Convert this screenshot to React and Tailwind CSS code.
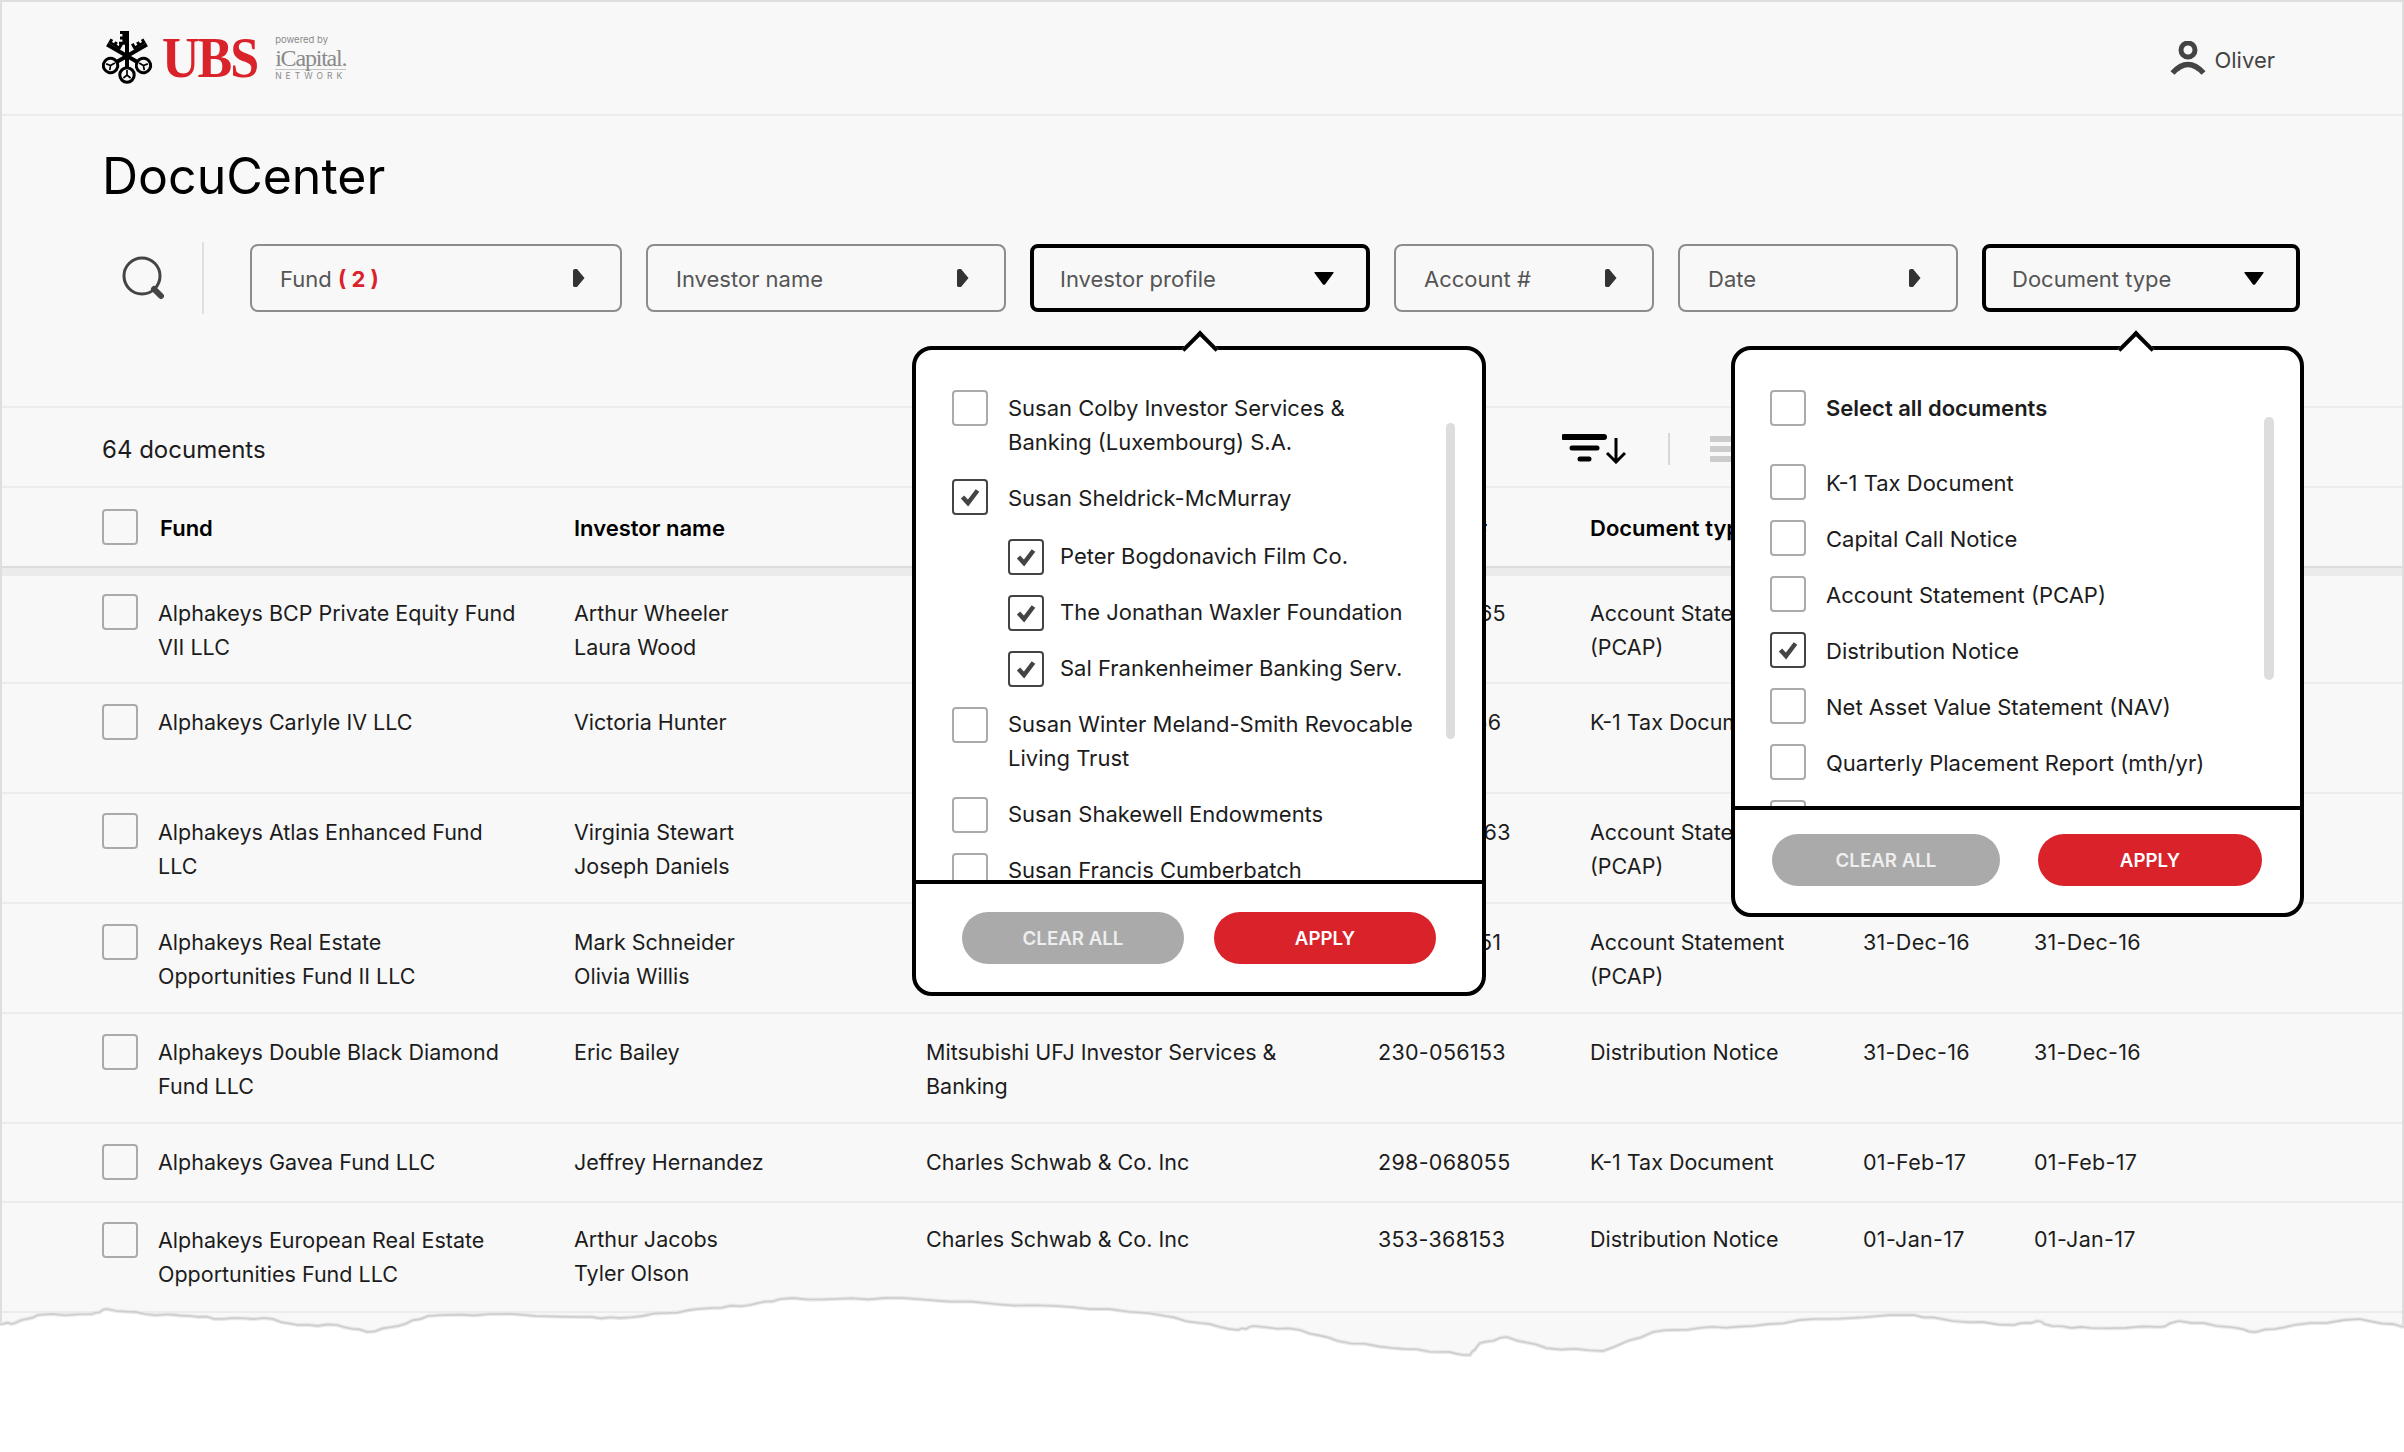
const rows = [
  { rowCls: "h-[108px] pt-[18px]", pad: "pt-[2px]", fund: ["Alphakeys BCP Private Equity Fund", "VII LLC"], investor: ["Arthur Wheeler", "Laura Wood"], profile: ["Charles Schwab & Co. Inc"], account: "230-056165", doc: ["Account Statement", "(PCAP)"], d1: "31-Dec-16", d2: "31-Dec-16" },
  { rowCls: "h-[110px] pt-5", fund: ["Alphakeys Carlyle IV LLC"], investor: ["Victoria Hunter"], profile: ["Charles Schwab & Co. Inc"], account: "230-051156", doc: ["K-1 Tax Document"], d1: "01-Feb-17", d2: "01-Feb-17" },
  { rowCls: "h-[110px] pt-[19px]", pad: "pt-[2px]", fund: ["Alphakeys Atlas Enhanced Fund", "LLC"], investor: ["Virginia Stewart", "Joseph Daniels"], profile: ["Charles Schwab & Co. Inc"], account: "298-068863", doc: ["Account Statement", "(PCAP)"], d1: "31-Dec-16", d2: "31-Dec-16" },
  { rowCls: "h-[110px] pt-5", fund: ["Alphakeys Real Estate", "Opportunities Fund II LLC"], investor: ["Mark Schneider", "Olivia Willis"], profile: ["Charles Schwab & Co. Inc"], account: "230-056151", doc: ["Account Statement", "(PCAP)"], d1: "31-Dec-16", d2: "31-Dec-16" },
  { rowCls: "h-[110px] pt-5", fund: ["Alphakeys Double Black Diamond", "Fund LLC"], investor: ["Eric Bailey"], profile: ["Mitsubishi UFJ Investor Services &", "Banking"], account: "230-056153", doc: ["Distribution Notice"], d1: "31-Dec-16", d2: "31-Dec-16" },
  { rowCls: "h-[79px] pt-5", fund: ["Alphakeys Gavea Fund LLC"], investor: ["Jeffrey Hernandez"], profile: ["Charles Schwab & Co. Inc"], account: "298-068055", doc: ["K-1 Tax Document"], d1: "01-Feb-17", d2: "01-Feb-17" },
  { rowCls: "h-[110px] pt-[18px]", fundCls: "pt-px", fund: ["Alphakeys European Real Estate", "Opportunities Fund LLC"], investor: ["Arthur Jacobs", "Tyler Olson"], profile: ["Charles Schwab & Co. Inc"], account: "353-368153", doc: ["Distribution Notice"], d1: "01-Jan-17", d2: "01-Jan-17" },
];

const tearPoints = [
  [0, 1324], [15, 1323], [38, 1315], [92, 1314], [107, 1309], [145, 1314], [191, 1316], [222, 1319], [264, 1318], [298, 1325],
  [337, 1325], [367, 1332], [398, 1326], [428, 1316], [490, 1314], [581, 1317], [620, 1318], [666, 1313], [712, 1308], [750, 1305],
  [780, 1299], [834, 1299], [903, 1298], [995, 1304], [1071, 1307], [1148, 1313], [1200, 1323], [1238, 1330], [1254, 1326], [1300, 1330],
  [1338, 1341], [1392, 1348], [1442, 1352], [1470, 1355], [1480, 1343], [1507, 1337], [1546, 1348], [1603, 1351], [1653, 1332], [1699, 1328],
  [1753, 1326], [1814, 1319], [1914, 1315], [1953, 1321], [2014, 1325], [2037, 1321], [2052, 1326], [2091, 1328], [2160, 1327], [2179, 1321],
  [2229, 1327], [2256, 1332], [2294, 1325], [2360, 1319], [2404, 1327],
];

function tearPath() {
  let d = "M0 1324";
  for (let i = 1; i < tearPoints.length; i++) {
    const [x0, y0] = tearPoints[i - 1];
    const [x1, y1] = tearPoints[i];
    for (let s = 1; s <= 4; s++) {
      const t = s / 4;
      const wobble = s === 4 ? 0 : Math.sin(i * 7.3 + s * 2.1) * 0.9;
      d += ` L${(x0 + (x1 - x0) * t).toFixed(1)} ${(y0 + (y1 - y0) * t + wobble).toFixed(1)}`;
    }
  }
  return d;
}

function Key({ angle, flip, top }) {
  return (
    <g transform={`translate(25 25) rotate(${angle}) scale(${flip ? -1 : 1} 1)`}>
      <rect x="-2" y={top} width="4" height={-top + 12} />
      <path d={`M-2 ${top} h-5 v3 h2.4 v2.4 h-2.4 v3 h2.4 v2.4 h-3.4 v3 h6.4 z`} />
      <circle cx="0" cy="19" r="7.2" fill="none" stroke="#000" strokeWidth="3" />
      <path d="M0 14 v5 M-3.6 22 l3.6 -3 l3.6 3" fill="none" stroke="#000" strokeWidth="1.7" />
    </g>
  );
}

function Logo() {
  return (
    <div className="flex items-center">
      <svg width="52" height="54" viewBox="0 0 52 54" className="shrink-0">
        <Key angle={-60} flip top={-23} />
        <Key angle={60} top={-23} />
        <Key angle={0} top={-25} />
      </svg>
      <span className="ml-[8px] text-[52px] leading-none font-bold tracking-[-2px] text-[#da222b] font-['Liberation_Serif',serif] scale-y-110">UBS</span>
      <div className="ml-[18px] flex flex-col text-[#8a8a8a]">
        <span className="text-[9.5px] leading-[10px]">powered by</span>
        <span className="mt-[2px] text-[24px] leading-[22px] tracking-[-1.2px] font-['Liberation_Serif',serif] border-b border-[#c4c4c4]">iCapital.</span>
        <span className="mt-[2px] text-[8.5px] leading-[9px] tracking-[4px]">NETWORK</span>
      </div>
    </div>
  );
}

function Check() {
  return (
    <svg width="32" height="32" viewBox="0 0 32 32" fill="none" stroke="#444" strokeWidth="4.5">
      <path d="M8.5 16 L14 22 L23.5 9.5" />
    </svg>
  );
}

function Checkbox({ checked }) {
  return (
    <span className={`flex size-9 shrink-0 items-center justify-center rounded-[4px] border-2 bg-transparent ${checked ? "border-[#444]" : "border-[#aaa]"}`}>
      {checked && <Check />}
    </span>
  );
}

function ArrowRight() {
  return (
    <svg width="13" height="18" viewBox="0 0 13 18" fill="#333">
      <path d="M1 1.5 Q1 0 3 0 L5 0 L12.5 9 L5 18 L3 18 Q1 18 1 16.5 Z" />
    </svg>
  );
}

function ArrowDown() {
  return (
    <svg width="20" height="13" viewBox="0 0 20 13" fill="#000">
      <path d="M1 0 H19 Q20 0 19.5 1 L11 12.5 Q10 13 9 12.5 L0.5 1 Q0 0 1 0 Z" />
    </svg>
  );
}

function FilterBox({ width, open, children }) {
  return (
    <div className={`flex h-[68px] items-center justify-between rounded-[8px] text-[22px] text-[#555] ${width} ${open ? "border-4 border-black pl-[26px] pr-[32px]" : "border-2 border-[#8c8c8c] pl-[28px] pr-[35px]"}`}>
      <span className="pt-[2px]">{children}</span>
      {open ? <ArrowDown /> : <ArrowRight />}
    </div>
  );
}

function OptionRow({ checked, sub, bold, lines, textCls = "pt-px", className = "" }) {
  return (
    <div className={`flex items-start ${sub ? "pl-[56px] gap-4" : "gap-5"} ${className}`}>
      <Checkbox checked={checked} />
      <div className={`text-[22px] leading-[34px] text-[#1c1c1c] ${textCls} ${bold ? "font-semibold" : ""}`}>
        {lines.map((l) => (
          <div key={l} className="whitespace-nowrap">{l}</div>
        ))}
      </div>
    </div>
  );
}

function Footer({ clearW, applyW, cls }) {
  return (
    <div className={`flex border-t-4 border-black ${cls}`}>
      <button className={`h-[52px] rounded-full bg-[#aaa] pt-[2px] text-[18.7px] font-semibold text-[#eee] ${clearW}`}>CLEAR ALL</button>
      <button className={`h-[52px] rounded-full bg-[#da222b] pt-[2px] text-[18.7px] font-semibold text-white ${applyW}`}>APPLY</button>
    </div>
  );
}

function Notch({ left }) {
  return <div className={`absolute -top-[14px] size-[26px] rotate-45 border-t-4 border-l-4 border-black bg-white ${left}`} />;
}

function Cell({ lines, bold, pad = "pt-px", className = "" }) {
  return (
    <div className={`leading-[34px] whitespace-nowrap ${pad} ${bold ? "text-[22px] font-semibold text-black" : "text-[21.5px] text-[#1c1c1c]"} ${className}`}>
      {lines.map((l) => (
        <div key={l}>{l}</div>
      ))}
    </div>
  );
}

const gridCols = "grid grid-cols-[472px_352px_452px_212px_273px_171px_1fr] pl-[100px]";

export default function App() {
  const tear = tearPath();
  return (
    <div className="relative h-[1452px] w-[2404px] overflow-hidden bg-white font-[Inter,sans-serif]">
      <div className="h-[1372px] border-x-2 border-t-2 border-[#dedede] bg-[#f8f8f8]">
        <header className="flex h-[114px] items-center justify-between border-b-2 border-[#ececec] pl-[100px] pr-[127px]">
          <Logo />
          <div className="flex items-center gap-[8px] pt-[2px] text-[22px] text-[#444]">
            <svg width="36" height="36" viewBox="0 0 36 36" fill="none" stroke="#444">
              <circle cx="18" cy="9" r="7" strokeWidth="5" />
              <path d="M2.5 32 Q18 15 33.5 32" strokeWidth="5.5" />
            </svg>
            <span className="pt-[2px]">Oliver</span>
          </div>
        </header>

        <h1 className="pl-[100px] pt-[28px] text-[50px] leading-[64px] text-black">DocuCenter</h1>

        <div className="mt-[34px] flex items-center pl-[120px]">
          <svg width="44" height="44" viewBox="0 0 44 44" fill="none" stroke="#444" className="shrink-0">
            <circle cx="20" cy="20" r="18" strokeWidth="3" />
            <path d="M32 33 L39 40" strokeWidth="6" strokeLinecap="round" />
          </svg>
          <div className="ml-[36px] h-[72px] w-[2px] bg-[#e0e0e0]" />
          <div className="ml-[46px] flex gap-6">
            <FilterBox width="w-[372px]">
              Fund <span className="font-bold text-[#da222b]">( 2 )</span>
            </FilterBox>
            <FilterBox width="w-[360px]">Investor name</FilterBox>
            <FilterBox width="w-[340px]" open>Investor profile</FilterBox>
            <FilterBox width="w-[260px]">Account #</FilterBox>
            <FilterBox width="w-[280px]">Date</FilterBox>
            <FilterBox width="w-[318px]" open>Document type</FilterBox>
          </div>
        </div>

        <div className="mt-[92px] flex h-[82px] items-center border-y-2 border-[#ececec] pl-[100px] pt-[3px] text-[24px] text-[#1c1c1c]">
          <span className="w-[158px] whitespace-nowrap pt-[2px]">64 documents</span>
          <div className="ml-[1302px] flex items-center">
            <svg width="64" height="30" viewBox="0 0 64 30" fill="none" stroke="#000">
              <path d="M2 3 H42" strokeWidth="6" strokeLinecap="round" />
              <path d="M10 14 H35" strokeWidth="5" strokeLinecap="round" />
              <path d="M18 25 H27" strokeWidth="5" strokeLinecap="round" />
              <path d="M54 4 V28 M45 19 L54 28 L63 19" strokeWidth="3" />
            </svg>
            <div className="ml-[42px] h-[32px] w-[2px] bg-[#d8d8d8]" />
            <div className="ml-[40px] flex w-[24px] flex-col gap-[4px]">
              <div className="h-[6px] bg-[#ccc]" />
              <div className="h-[6px] bg-[#ccc]" />
              <div className="h-[6px] bg-[#ccc]" />
            </div>
          </div>
        </div>

        <div className={`${gridCols} h-[78px] items-center border-b-2 border-[#dddddd] box-content`}>
          <div className="flex items-center gap-[22px]">
            <Checkbox />
            <Cell lines={["Fund"]} bold />
          </div>
          <Cell lines={["Investor name"]} bold />
          <Cell lines={["Investor profile"]} bold />
          <Cell lines={["Account #"]} bold />
          <Cell lines={["Document type"]} bold />
          <Cell lines={["Statement date"]} bold />
          <Cell lines={["Posted date"]} bold />
        </div>
        <div className="h-2 bg-[#ebebeb]" />

        {rows.map((r) => (
          <div key={r.fund[0]} className={`${gridCols} ${r.rowCls} border-b-2 border-[#ececec]`}>
            <div className={`flex items-start gap-5 ${r.fundCls || ""}`}>
              <Checkbox />
              <Cell lines={r.fund} pad={r.pad} />
            </div>
            <Cell lines={r.investor} pad={r.pad} />
            <Cell lines={r.profile} pad={r.pad} />
            <Cell lines={[r.account]} pad={r.pad} className="tracking-[0.3px]" />
            <Cell lines={r.doc} pad={r.pad} />
            <Cell lines={[r.d1]} pad={r.pad} className="tracking-[0.3px]" />
            <Cell lines={[r.d2]} pad={r.pad} className="tracking-[0.3px]" />
          </div>
        ))}
      </div>

      {/* investor profile dropdown */}
      <div className="absolute left-[912px] top-[346px] h-[650px] w-[574px] rounded-[20px] border-4 border-black bg-white">
        <Notch left="left-[271px]" />
        <div className="relative h-[530px] overflow-hidden pl-[36px] pt-[40px]">
          <div className="flex flex-col gap-5">
            <OptionRow lines={["Susan Colby Investor Services &", "Banking (Luxembourg) S.A."]} />
            <OptionRow checked lines={["Susan Sheldrick-McMurray"]} textCls="pt-[2px]" className="mb-1" />
            <OptionRow checked sub lines={["Peter Bogdonavich Film Co."]} textCls="pt-0" />
            <OptionRow checked sub lines={["The Jonathan Waxler Foundation"]} textCls="pt-0" />
            <OptionRow checked sub lines={["Sal Frankenheimer Banking Serv."]} textCls="pt-0" />
            <OptionRow lines={["Susan Winter Meland-Smith Revocable", "Living Trust"]} textCls="pt-0" className="mb-[2px]" />
            <OptionRow lines={["Susan Shakewell Endowments"]} textCls="pt-0" />
            <OptionRow lines={["Susan Francis Cumberbatch"]} textCls="pt-0" />
          </div>
          <div className="absolute left-[530px] top-[73px] h-[316px] w-[9px] rounded-full bg-[#ddd]" />
        </div>
        <Footer clearW="w-[222px]" applyW="w-[222px]" cls="gap-[30px] pl-[46px] pt-[28px]" />
      </div>

      {/* document type dropdown */}
      <div className="absolute left-[1731px] top-[346px] h-[571px] w-[573px] rounded-[20px] border-4 border-black bg-white">
        <Notch left="left-[388px]" />
        <div className="relative h-[456px] overflow-hidden pl-[35px] pt-[40px]">
          <div className="flex flex-col gap-5">
            <OptionRow bold lines={["Select all documents"]} className="mb-[18px]" />
            <OptionRow lines={["K-1 Tax Document"]} textCls="pt-[2px]" />
            <OptionRow lines={["Capital Call Notice"]} textCls="pt-[2px]" />
            <OptionRow lines={["Account Statement (PCAP)"]} textCls="pt-[2px]" />
            <OptionRow checked lines={["Distribution Notice"]} textCls="pt-[2px]" />
            <OptionRow lines={["Net Asset Value Statement (NAV)"]} textCls="pt-[2px]" />
            <OptionRow lines={["Quarterly Placement Report (mth/yr)"]} textCls="pt-[2px]" />
            <OptionRow lines={["Subscription Document"]} textCls="pt-[2px]" />
          </div>
          <div className="absolute left-[529px] top-[67px] h-[263px] w-[10px] rounded-full bg-[#ddd]" />
        </div>
        <Footer clearW="w-[228px]" applyW="w-[224px]" cls="gap-[38px] pl-[37px] pt-[24px]" />
      </div>

      {/* torn paper edge */}
      <svg className="absolute left-0 top-0" width="2404" height="1452" viewBox="0 0 2404 1452">
        <path d={`${tear} L2404 1452 L0 1452 Z`} fill="#fff" />
        <path d={tear} fill="none" stroke="#e8e8e8" strokeWidth="4" />
        <path d={tear} fill="none" stroke="#cdcdcd" strokeWidth="1.6" />
      </svg>
    </div>
  );
}
